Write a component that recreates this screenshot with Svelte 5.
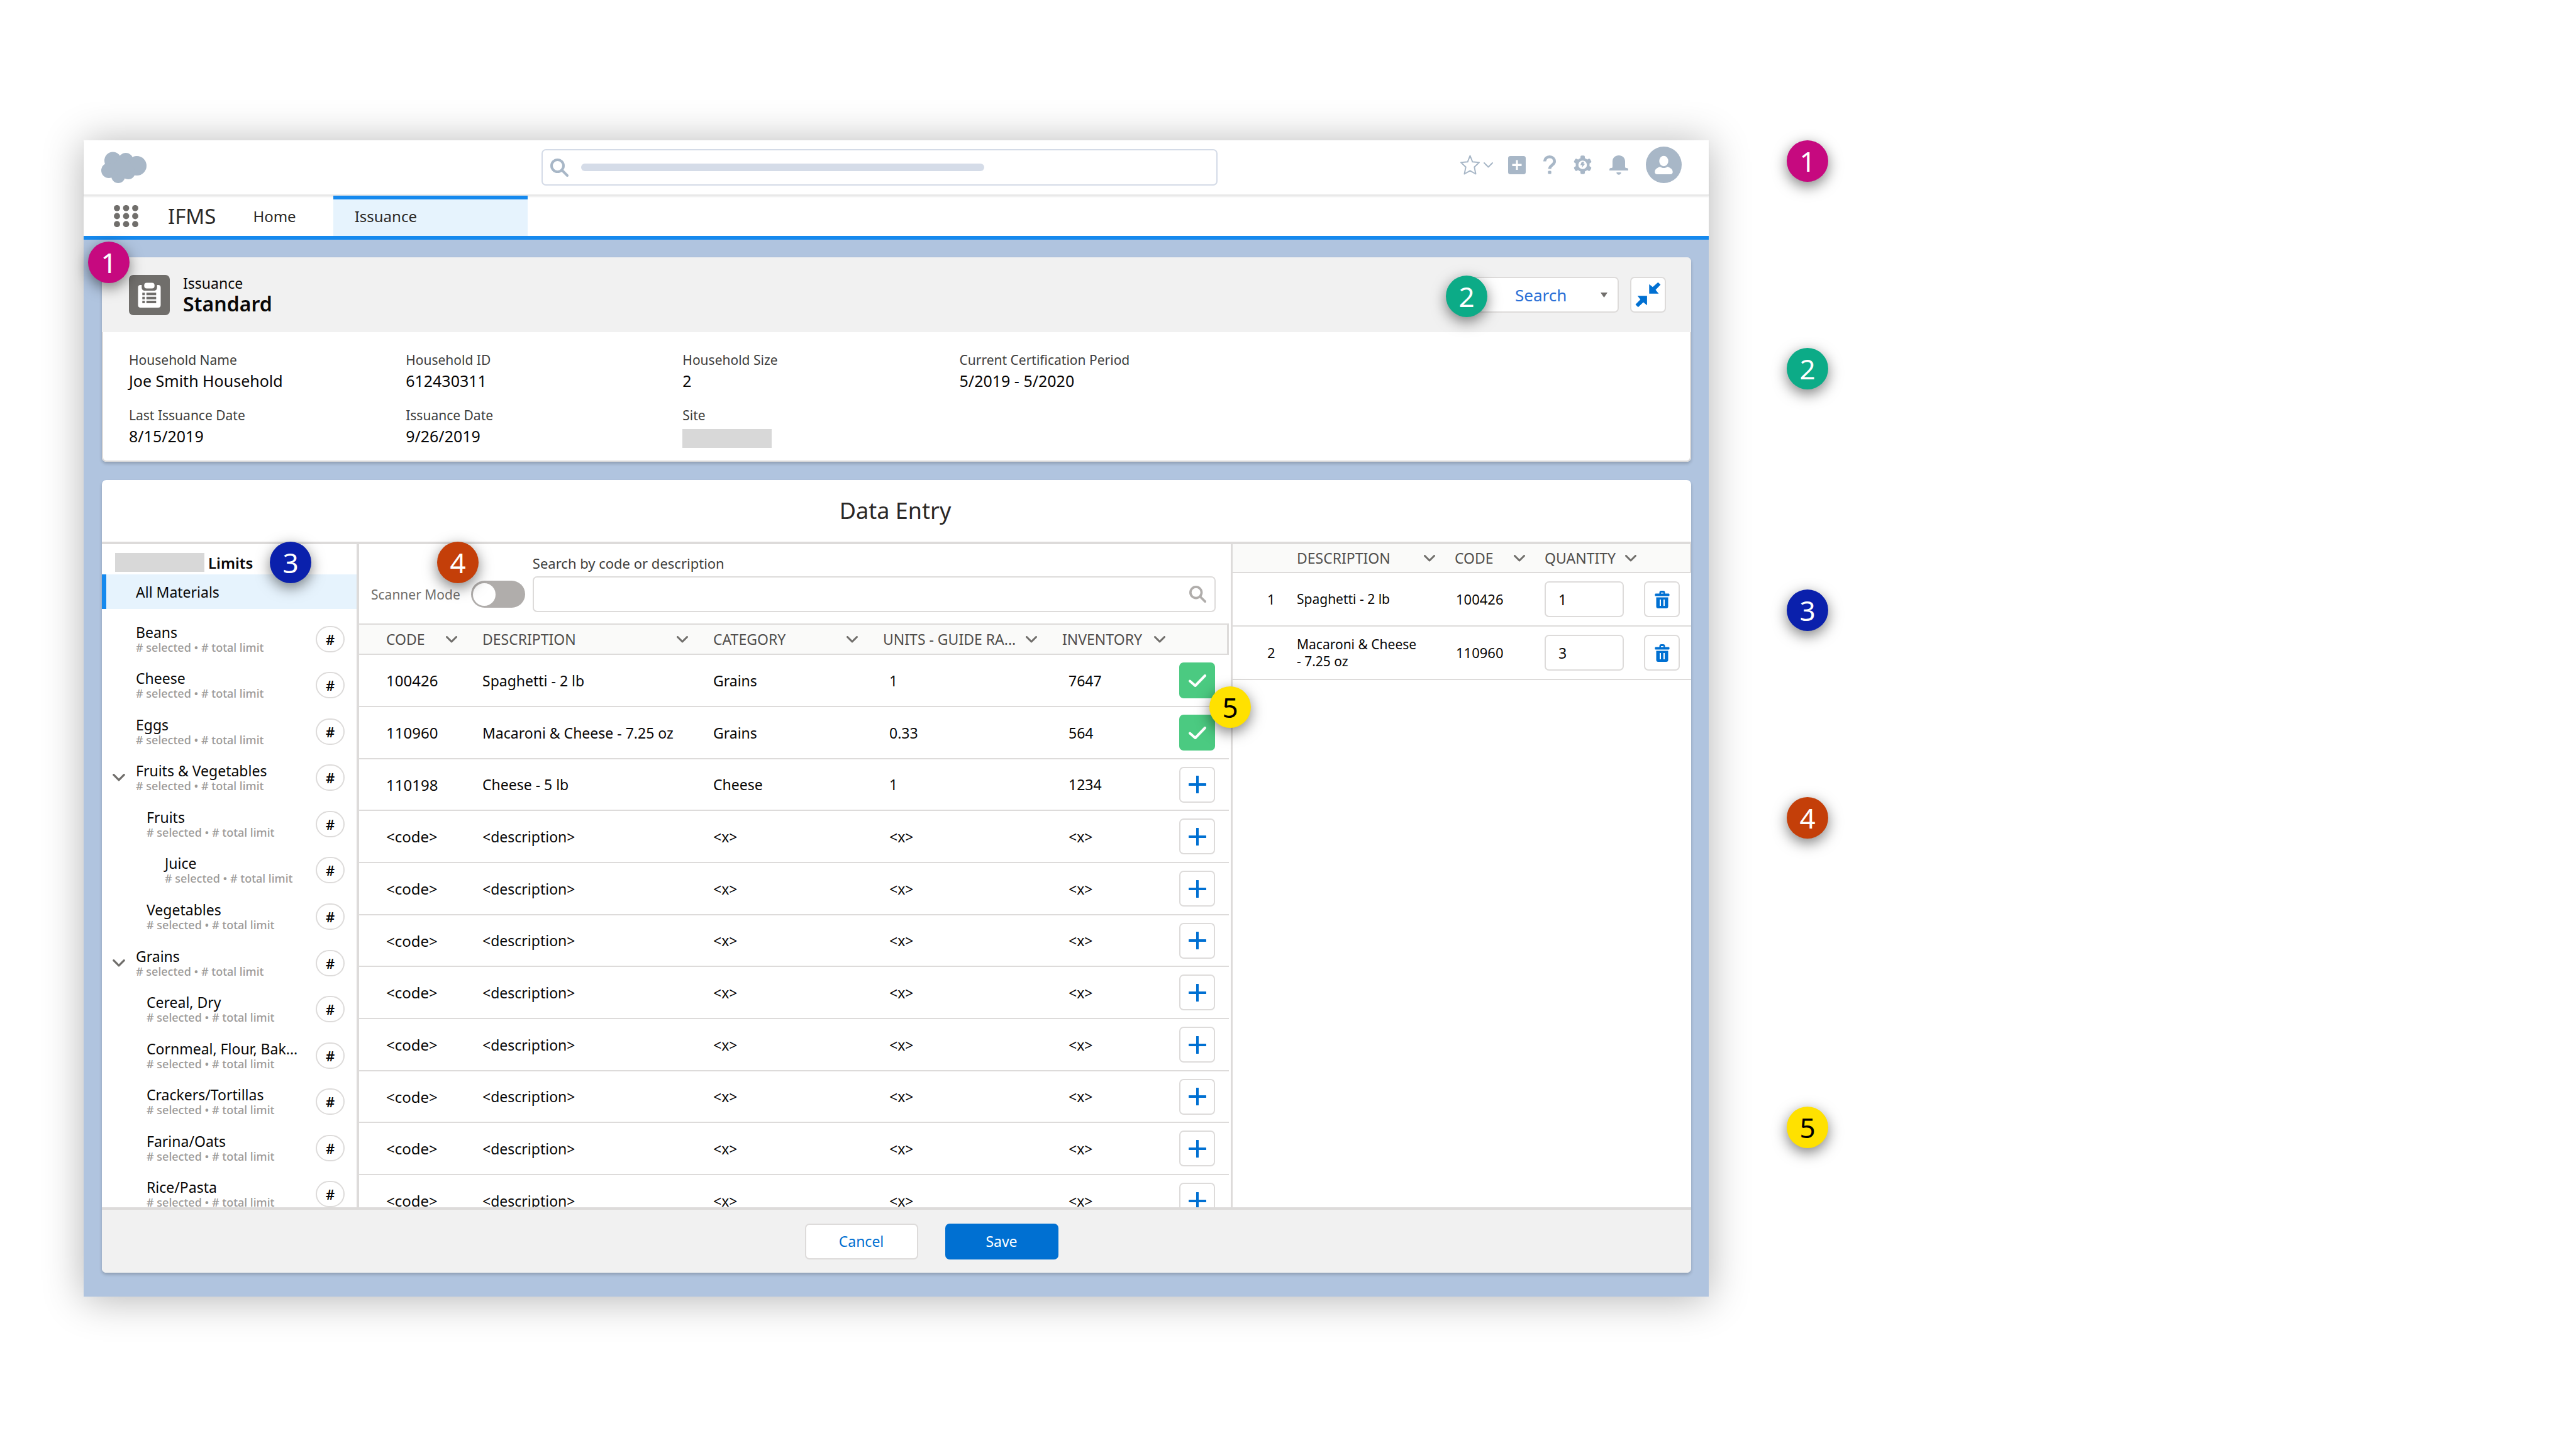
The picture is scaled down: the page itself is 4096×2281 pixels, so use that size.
<script>
  const fields = [
    { label: 'Household Name', value: 'Joe Smith Household' },
    { label: 'Household ID', value: '612430311' },
    { label: 'Household Size', value: '2' },
    { label: 'Current Certification Period', value: '5/2019 - 5/2020' },
    { label: 'Last Issuance Date', value: '8/15/2019' },
    { label: 'Issuance Date', value: '9/26/2019' },
    { label: 'Site', value: '' }
  ];

  const limits = [
    { name: 'Beans', level: 0 },
    { name: 'Cheese', level: 0 },
    { name: 'Eggs', level: 0 },
    { name: 'Fruits & Vegetables', level: 0, open: true },
    { name: 'Fruits', level: 1 },
    { name: 'Juice', level: 2 },
    { name: 'Vegetables', level: 1 },
    { name: 'Grains', level: 0, open: true },
    { name: 'Cereal, Dry', level: 1 },
    { name: 'Cornmeal, Flour, Bak...', level: 1 },
    { name: 'Crackers/Tortillas', level: 1 },
    { name: 'Farina/Oats', level: 1 },
    { name: 'Rice/Pasta', level: 1 }
  ];

  const blank = { code: '<code>', desc: '<description>', cat: '<x>', units: '<x>', stock: '<x>', added: false };
  const materials = [
    { code: '100426', desc: 'Spaghetti - 2 lb', cat: 'Grains', units: '1', stock: '7647', added: true },
    { code: '110960', desc: 'Macaroni & Cheese - 7.25 oz', cat: 'Grains', units: '0.33', stock: '564', added: true },
    { code: '110198', desc: 'Cheese - 5 lb', cat: 'Cheese', units: '1', stock: '1234', added: false },
    ...Array.from({ length: 8 }, () => ({ ...blank }))
  ];
  const materialHeads = ['CODE', 'DESCRIPTION', 'CATEGORY', 'UNITS - GUIDE RA...', 'INVENTORY'];

  let lines = $state([
    { desc: 'Spaghetti - 2 lb', code: '100426', qty: '1' },
    { desc: 'Macaroni & Cheese - 7.25 oz', code: '110960', qty: '3' }
  ]);
  const lineHeads = ['DESCRIPTION', 'CODE', 'QUANTITY'];
</script>

{#snippet chevron()}
  <svg class="chev" viewBox="0 0 18 11" aria-hidden="true"><path d="M1.5 1.5 9 9l7.500-7.500" /></svg>
{/snippet}

{#snippet lens()}
  <svg class="lens" viewBox="0 0 29 29" aria-hidden="true"><circle cx="11.500" cy="11.500" r="9.500" /><path d="M18.500 18.500 27 27" /></svg>
{/snippet}

<div class="page">
  <div class="window">
    <header class="top">
      <svg class="cloud" viewBox="0 0 72 50" role="img" aria-label="Cloud">
        <ellipse cx="18.500" cy="14.500" rx="13.500" ry="14" /><ellipse cx="39" cy="13.500" rx="11.500" ry="11.500" /><circle cx="56.500" cy="22.500" r="15.500" />
        <circle cx="12" cy="30" r="12" /><circle cx="27" cy="39" r="11" /><circle cx="43" cy="33" r="11" /><circle cx="34" cy="25" r="14" />
      </svg>
      <label class="global">
        {@render lens()}
        <span class="bar"></span>
        <input type="text" aria-label="Search" />
      </label>
      <div class="tools">
        <div class="lead">
          <button class="fav" aria-label="Favorites">
            <svg width="31" height="32" viewBox="0 0 31 32"><path class="line" d="M15.500 1.500 19.400 11.300 30 12.200 22.300 19.400 24.500 30.500 15.500 25.300 6.500 30.500 8.700 19.400 1 12.200 11.600 11.300Z" /></svg>
            <svg width="15" height="9" viewBox="0 0 15 9"><path class="line" d="M1 1 7.500 7.500 14 1" /></svg>
          </button>
          <button aria-label="Add">
            <svg width="28" height="29" viewBox="0 0 28 29"><path fill-rule="evenodd" d="M3.500 0h21a3.500 3.500 0 0 1 3.500 3.500v22a3.500 3.500 0 0 1-3.500 3.500h-21a3.500 3.500 0 0 1-3.500-3.500v-22a3.500 3.500 0 0 1 3.500-3.500ZM12.500 6.500v6h-6v3.500h6v6h3v-6h6v-3.500h-6v-6Z" /></svg>
          </button>
        </div>
        <button aria-label="Help">
          <svg width="20" height="30" viewBox="0 0 20 30"><path class="bold" d="M2.300 9.500C2.300 5 5.500 2.300 10 2.300S17.700 5.500 17.700 9.800C17.700 15.500 10 15.500 10 21.500" /><rect x="7.300" y="24.500" width="5.400" height="5" rx="1.500" /></svg>
        </button>
        <button aria-label="Setup">
          <svg width="29" height="30" viewBox="-14.500 -15 29 30">
            {#each [0, 60, 120, 180, 240, 300] as a}
              <rect x="-3.500" y="-14.700" width="7" height="8" rx="2" transform={`rotate(${a})`} />
            {/each}
            <circle class="ring" r="8.900" />
            <path d="M-1.500-4.800h4l-1.300 3.300h2.600l-5.200 6.300 1-4.300h-3.200Z" />
          </svg>
        </button>
        <button aria-label="Notifications">
          <svg width="30" height="31" viewBox="0 0 30 31"><path d="M5 10C5 4 9 0 15 0s10 4 10 10v8c0 2 1 2 3.500 2.300 1 .2 1.500 1 1.500 3.700H0c0-2.700.500-3.500 1.500-3.700C4 20 5 20 5 18ZM11.300 27h7.400c0 5-7.400 5-7.400 0Z" /></svg>
        </button>
        <button aria-label="Profile">
          <svg width="57" height="58" viewBox="0 0 57 58"><ellipse cx="28.500" cy="29" rx="28.500" ry="29" /><ellipse class="paper" cx="28.500" cy="23" rx="7.200" ry="8.200" /><path class="paper" d="M18 44c-2.500 0-3.700-1.500-3.700-3.500 0-5 3.200-6.200 8.200-8.500 4 2.800 8 2.800 12 0 5 2.300 8.200 3.500 8.200 8.500 0 2-1.200 3.500-3.700 3.500Z" /></svg>
        </button>
      </div>
    </header>

    <nav>
      <button class="launcher" aria-label="App launcher">
        <svg width="39" height="35" viewBox="0 0 39 35">
          {#each [0, 1, 2] as r}{#each [0, 1, 2] as c}<circle cx={5 + c * 14.500} cy={4.800 + r * 12.700} r="4.900" />{/each}{/each}
        </svg>
      </button>
      <span class="brand">IFMS</span>
      <a class="home" href="#home">Home</a>
      <a class="tab" href="#issuance" aria-current="page">Issuance</a>
    </nav>

    <main>
      <section class="card summary">
        <span class="badge magenta one">1</span>
        <div class="heading">
          <svg class="tile" width="65" height="64" viewBox="0 0 65 64" aria-hidden="true">
            <rect width="65" height="64" rx="7" fill="#706e6b" />
            <rect x="14.500" y="16" width="36" height="36" rx="4" fill="#fff" />
            <path d="M20.300 16h24.400v4c0 3-2 5-5 5H25.300c-3 0-5-2-5-5Z" fill="#706e6b" />
            <rect x="24.300" y="12.500" width="16.400" height="9" rx="4" fill="#fff" />
            <path d="M21.300 28.200h4v4h-4ZM27.800 28.200h15.500v4H27.800ZM21.300 34.700h4v4h-4ZM27.800 34.700h15.500v4H27.800ZM21.300 41h4v4h-4ZM27.800 41h15.500v4H27.800Z" fill="#706e6b" />
          </svg>
          <div class="titles">
            <p>Issuance</p>
            <h1>Standard</h1>
          </div>
          <div class="split">
            <span class="badge green two">2</span>
            <button class="search">Search</button>
            <button class="more" aria-label="More actions"><svg width="11" height="8" viewBox="0 0 11 8"><path d="M0 0h11L5.500 8Z" /></svg></button>
          </div>
          <button class="square" aria-label="Collapse">
            <svg width="57" height="57" viewBox="0 0 57 57"><path d="M30.300 26.700V11.800l5.600 4.400 8.500-7.400 4 3.800-7.900 8.100 4.900 6ZM26.900 30.300H11.700l4.700 5.600L8.500 44l4.200 4.300L21 40.500l5.900 4.800Z" /></svg>
          </button>
        </div>
        <dl>
          {#each fields as f}
            <div>
              <dt>{f.label}</dt>
              <dd>{#if f.value}{f.value}{:else}<span class="redact"></span>{/if}</dd>
            </div>
          {/each}
        </dl>
      </section>

      <section class="card entry">
        <h2>Data Entry</h2>
        <div class="panels">
          <aside>
            <span class="badge blue three">3</span>
            <h3><span class="redact"></span>Limits</h3>
            <a class="all" href="#all">All Materials</a>
            <div class="clip">
              <ul>
                {#each limits as l}
                  <li class={`level${l.level}`}>
                    {#if l.open}
                      <button class="twist" aria-label={`Collapse ${l.name}`}>{@render chevron()}</button>
                    {/if}
                    <div class="name">
                      <span>{l.name}</span>
                      <small># selected • # total limit</small>
                    </div>
                    <span class="count">#</span>
                  </li>
                {/each}
              </ul>
            </div>
          </aside>

          <div class="middle">
            <span class="badge orange four">4</span>
            <span class="badge yellow five">5</span>
            <div class="filters">
              <label class="scanner">Scanner Mode <input type="checkbox" /></label>
              <div class="finder">
                <label for="find">Search by code or description</label>
                <div class="box"><input id="find" type="text" />{@render lens()}</div>
              </div>
            </div>
            <div class="clip">
              <table class="materials">
                <colgroup><col class="m1" /><col class="m2" /><col class="m3" /><col class="m4" /><col class="m5" /><col class="m6" /></colgroup>
                <thead>
                  <tr>
                    {#each materialHeads as h}<th><span>{h}{@render chevron()}</span></th>{/each}
                    <th aria-label="Add"></th>
                  </tr>
                </thead>
                <tbody>
                  {#each materials as m}
                    <tr>
                      <td>{m.code}</td>
                      <td>{m.desc}</td>
                      <td>{m.cat}</td>
                      <td class="num">{m.units}</td>
                      <td class="num">{m.stock}</td>
                      <td class="act">
                        {#if m.added}
                          <button class="square added" aria-label="Added"><svg width="28" height="20" viewBox="0 0 28 20"><path d="M2 10.500 10.500 18 26 2" /></svg></button>
                        {:else}
                          <button class="square" aria-label="Add"><svg width="28" height="28" viewBox="0 0 28 28"><path d="M12 1a2 2 0 0 1 4 0v11h11a2 2 0 0 1 0 4H16v11a2 2 0 0 1-4 0V16H1a2 2 0 0 1 0-4h11Z" /></svg></button>
                        {/if}
                      </td>
                    </tr>
                  {/each}
                </tbody>
              </table>
            </div>
          </div>

          <div class="right">
            <table class="lines">
              <colgroup><col class="n1" /><col class="n2" /><col class="n3" /><col class="n4" /><col class="n5" /></colgroup>
              <thead>
                <tr>
                  <th aria-label="Line"></th>
                  {#each lineHeads as h}<th><span>{h}{@render chevron()}</span></th>{/each}
                  <th aria-label="Remove"></th>
                </tr>
              </thead>
              <tbody>
                {#each lines as l, i}
                  <tr>
                    <td class="index">{i + 1}</td>
                    <td class="what">{l.desc}</td>
                    <td class="code">{l.code}</td>
                    <td><input type="text" aria-label={`Quantity of ${l.desc}`} bind:value={l.qty} /></td>
                    <td>
                      <button class="square" aria-label={`Remove ${l.desc}`}>
                        <svg width="24" height="28" viewBox="0 0 24 28"><path fill-rule="evenodd" d="M1.500 4.500H7.500V3c0-2 1-3 3-3h3c2 0 3 1 3 3v1.500h6c1.500 0 1.500 4 0 4h-21c-1.500 0-1.500-4 0-4ZM10 4.500h4V3h-4ZM2.500 10.500h19V25c0 2-1 3-3 3h-13c-2 0-3-1-3-3ZM8 14v10h2V14ZM14 14v10h2V14Z" /></svg>
                      </button>
                    </td>
                  </tr>
                {/each}
              </tbody>
            </table>
          </div>
        </div>
        <footer>
          <button class="cancel">Cancel</button>
          <button class="save">Save</button>
        </footer>
      </section>
    </main>
  </div>

  <ol class="legend">
    <li><span class="badge magenta">1</span></li>
    <li><span class="badge green">2</span></li>
    <li><span class="badge blue">3</span></li>
    <li><span class="badge orange">4</span></li>
    <li><span class="badge yellow">5</span></li>
  </ol>
</div>

<style>
  :global(body) {
    background: #fff;
  }
  .page,
  .page * {
    box-sizing: border-box;
  }
  .page {
    display: grid;
    grid-template-columns: 2584fr 1379fr;
    height: 100vh;
    padding: 223px 0 220px 133px;
    overflow: hidden;
    font-family: 'Noto Sans', 'Open Sans', sans-serif;
    font-size: 23px;
    color: #080707;
  }
  h1, h2, h3, p, dl, dd, ul, ol {
    margin: 0;
    padding: 0;
    list-style: none;
  }
  button, input {
    margin: 0;
    padding: 0;
    border: 0;
    background: none;
    font: inherit;
    color: inherit;
  }
  a {
    color: inherit;
    text-decoration: none;
  }
  svg {
    display: block;
    flex: none;
  }
  .window {
    display: flex;
    flex-direction: column;
    min-height: 0;
    background: #b0c4df;
    box-shadow: 0 4px 60px rgba(0, 0, 0, 0.3);
  }
  .chev {
    width: 18px;
    height: 11px;
    fill: none;
    stroke: #706e6b;
    stroke-width: 3;
    stroke-linecap: round;
    stroke-linejoin: round;
  }
  .lens {
    width: 29px;
    height: 29px;
    fill: none;
    stroke: #a8b7c7;
    stroke-width: 4;
    stroke-linecap: round;
  }

  .top {
    position: relative;
    z-index: 1;
    display: grid;
    grid-template-columns: 728fr 1075fr 781fr;
    align-items: center;
    height: 88px;
    background: #fff;
    border-bottom: 2px solid #e8e8e8;
    box-shadow: 0 2px 2px rgba(0, 0, 0, 0.08);
  }
  .cloud {
    width: 72px;
    height: 50px;
    margin-left: 28px;
    fill: #a8b7c7;
  }
  .global {
    display: flex;
    align-items: center;
    gap: 20px;
    height: 58px;
    padding: 0 12px;
    border: 2px solid #d4dbe7;
    border-radius: 7px;
  }
  .bar {
    width: 641px;
    height: 12px;
    border-radius: 6px;
    background: #d5dce8;
  }
  .global input {
    flex: 1;
    min-width: 0;
  }
  .tools {
    display: flex;
    align-items: center;
    justify-content: flex-end;
    gap: 28px;
    padding: 0 43px 8px 0;
    fill: #a8b7c7;
  }
  .lead {
    display: flex;
    align-items: center;
    gap: 24px;
  }
  .fav {
    display: flex;
    align-items: center;
    gap: 6px;
  }
  .line {
    fill: none;
    stroke: #a8b7c7;
    stroke-width: 2;
    stroke-linejoin: round;
    stroke-linecap: round;
  }
  .bold {
    fill: none;
    stroke: #a8b7c7;
    stroke-width: 4.600;
    stroke-linecap: butt;
  }
  .ring {
    fill: #fff;
    stroke: #a8b7c7;
    stroke-width: 4.200;
  }
  .paper {
    fill: #fff;
  }

  nav {
    display: flex;
    align-items: center;
    height: 70px;
    padding-left: 48px;
    background: #fff;
    border-bottom: 6px solid #1589ee;
    color: #2b2826;
  }
  .launcher {
    margin-right: 47px;
    fill: #706e6b;
  }
  .brand {
    font-size: 33px;
  }
  .home {
    padding: 0 59px;
  }
  .home,
  .tab {
    font-size: 24px;
  }
  .tab {
    position: relative;
    z-index: 2;
    display: flex;
    align-items: center;
    align-self: stretch;
    width: 309px;
    padding-left: 34px;
    background: #e6f3fd;
    box-shadow: inset 0 6px 0 #1589ee;
  }

  main {
    flex: 1;
    display: flex;
    flex-direction: column;
    gap: 29px;
    min-height: 0;
    padding: 28px 28px 38px 29px;
  }
  .card {
    position: relative;
    background: #fff;
    border-radius: 7px;
    box-shadow: 0 3px 5px rgba(0, 0, 0, 0.2);
  }
  .summary {
    box-shadow: inset 0 0 0 2px #dddbda, 0 3px 5px rgba(0, 0, 0, 0.2);
  }
  .heading {
    display: flex;
    align-items: center;
    height: 119px;
    padding: 0 40px 0 43px;
    background: #f1f1f1;
    border-radius: 7px 7px 0 0;
  }
  .titles {
    flex: 1;
    padding-left: 21px;
  }
  .titles p {
    line-height: 28px;
  }
  h1 {
    font-size: 32px;
    line-height: 38px;
    font-weight: 600;
  }
  .split {
    position: relative;
    display: flex;
    align-items: center;
    justify-content: space-between;
    width: 242px;
    height: 57px;
    margin-right: 18px;
    background: #fff;
    border: 2px solid #dddbda;
    border-radius: 7px;
  }
  .search {
    padding-left: 75px;
    font-size: 26px;
    color: #2a6fd6;
  }
  .more {
    padding-right: 16px;
    fill: #706e6b;
  }
  .square {
    display: flex;
    align-items: center;
    justify-content: center;
    width: 57px;
    height: 57px;
    background: #fff;
    border: 2px solid #dddbda;
    border-radius: 7px;
    fill: #0070d2;
  }
  .added {
    background: #4bca81;
    border-color: #4bca81;
    fill: none;
    stroke: #fff;
    stroke-width: 4;
    stroke-linecap: round;
    stroke-linejoin: round;
  }
  dl {
    display: grid;
    grid-template-columns: repeat(4, 440fr) 723fr;
    row-gap: 22px;
    padding: 29px 0 23px 43px;
  }
  dl div:nth-child(5) {
    grid-column: 1;
  }
  dt {
    font-size: 21px;
    line-height: 30px;
    color: #3e3e3c;
  }
  dd {
    display: flow-root;
    height: 36px;
    line-height: 36px;
    font-size: 25px;
  }
  .redact {
    display: block;
    width: 142px;
    height: 30px;
    background: #d8d8d8;
  }
  dd .redact {
    margin-top: 7px;
  }

  .entry {
    flex: 1;
    display: flex;
    flex-direction: column;
    min-height: 0;
  }
  h2 {
    height: 102px;
    padding-right: 4px;
    border-bottom: 4px solid #dddbda;
    font-size: 36px;
    font-weight: 400;
    line-height: 98px;
    text-align: center;
    color: #2b2826;
  }
  .panels {
    flex: 1;
    display: grid;
    grid-template-columns: 409fr 1389fr 729fr;
    grid-template-rows: minmax(0, 1fr);
    min-height: 0;
  }
  aside,
  .middle {
    position: relative;
    display: flex;
    flex-direction: column;
    min-width: 0;
    min-height: 0;
  }
  aside {
    border-right: 4px solid #dddbda;
  }
  .middle {
    border-right: 3px solid #dddbda;
  }
  .clip {
    flex: 1;
    min-height: 0;
    overflow: hidden;
  }
  h3 {
    display: flex;
    align-items: center;
    gap: 6px;
    height: 48px;
    padding: 10px 0 0 21px;
    font-size: 24px;
    font-weight: 600;
  }
  .all {
    display: flex;
    align-items: center;
    height: 55px;
    padding-left: 47px;
    background: #e6f3fd;
    border-left: 7px solid #1589ee;
  }
  ul {
    display: grid;
    grid-template-rows: repeat(13, 1fr);
    height: 967px;
    padding-top: 11px;
  }
  li {
    position: relative;
    display: flex;
    align-items: center;
  }
  ul li {
    padding: 0 19px 0 54px;
  }
  ul .level1 {
    padding-left: 71px;
  }
  ul .level2 {
    padding-left: 100px;
  }
  .twist {
    position: absolute;
    left: 17px;
  }
  .twist .chev {
    width: 20px;
    height: 12px;
  }
  .name {
    flex: 1;
    display: flex;
    flex-direction: column;
    white-space: nowrap;
    line-height: 26px;
  }
  small {
    font-size: 18px;
    line-height: 22px;
    font-weight: 500;
    color: #9c9a98;
  }
  .count {
    display: flex;
    align-items: center;
    justify-content: center;
    width: 46px;
    height: 42px;
    border: 2px solid #dddbda;
    border-radius: 21px;
    font-size: 22px;
    font-weight: 600;
  }

  .filters {
    display: flex;
    align-items: flex-end;
    gap: 12px;
    height: 126px;
    padding: 0 24px 18px 19px;
  }
  .scanner {
    display: flex;
    align-items: center;
    gap: 17px;
    height: 57px;
    font-size: 21px;
    color: #706e6b;
    white-space: nowrap;
  }
  .scanner input {
    appearance: none;
    display: flex;
    align-items: center;
    width: 86px;
    height: 43px;
    padding: 3px;
    border-radius: 22px;
    background: #b0adab;
  }
  .scanner input::before {
    content: '';
    width: 36px;
    height: 36px;
    border-radius: 50%;
    background: #fff;
  }
  .scanner input:checked {
    justify-content: flex-end;
    background: #0070d2;
  }
  .finder {
    flex: 1;
  }
  .finder label {
    display: block;
    font-size: 22px;
    line-height: 42px;
    color: #3e3e3c;
  }
  .box {
    display: flex;
    align-items: center;
    height: 57px;
    padding: 0 13px;
    border: 2px solid #dddbda;
    border-radius: 7px;
  }
  .box input {
    flex: 1;
    min-width: 0;
  }
  .box .lens {
    width: 27px;
    height: 27px;
    stroke: #b0adab;
  }

  table {
    width: 100%;
    border-collapse: separate;
    border-spacing: 0;
    table-layout: fixed;
  }
  th {
    padding: 0 20px;
    background: #fafaf9;
    border-bottom: 2px solid #dddbda;
    color: #514f4d;
    font-weight: 400;
    white-space: nowrap;
  }
  th span {
    display: flex;
    align-items: center;
    justify-content: space-between;
  }
  td {
    padding: 0 20px;
    border-bottom: 2px solid #dddbda;
    text-align: left;
  }
  .materials {
    width: calc(100% - 3px);
  }
  .materials th {
    height: 50px;
    border-top: 2px solid #dddbda;
  }
  .materials th:last-child {
    border-right: 3px solid #dddbda;
  }
  .materials th:first-child,
  .materials td:first-child {
    padding-left: 43px;
  }
  .materials td:first-child {
    font-size: 24px;
  }
  .materials td {
    height: 83px;
    white-space: nowrap;
  }
  .materials tr:nth-child(3n) td {
    height: 82px;
  }
  .materials .num {
    padding-left: 30px;
  }
  .materials .act {
    padding: 0 21px 0 2px;
  }
  .m1 { width: 176px; }
  .m2 { width: 367px; }
  .m3 { width: 270px; }
  .m4 { width: 285px; }
  .m5 { width: 204px; }
  .m6 { width: 81px; }

  .lines th {
    height: 46px;
    padding-right: 11px;
  }
  .lines th:last-child {
    border-right: 2px solid #dddbda;
  }
  .lines td {
    height: 85px;
    font-size: 22px;
    line-height: 27px;
  }
  .lines td:last-child {
    padding: 0 0 0 1px;
  }
  .lines .index {
    padding: 0 0 0 55px;
  }
  .lines .what {
    padding-right: 34px;
    font-size: 21px;
  }
  .lines .code {
    padding: 0 0 0 22px;
  }
  .lines input {
    display: block;
    width: 126px;
    height: 57px;
    padding: 0 20px;
    border: 2px solid #dddbda;
    border-radius: 7px;
    font-size: 23px;
  }
  .n1 { width: 82px; }
  .n2 { width: 251px; }
  .n3 { width: 143px; }
  .n4 { width: 177px; }
  .n5 { width: 76px; }

  footer {
    display: flex;
    align-items: center;
    justify-content: center;
    gap: 43px;
    height: 104px;
    padding-left: 111px;
    background: #f1f1f1;
    border-top: 4px solid #dddbda;
    border-radius: 0 0 7px 7px;
  }
  footer button {
    width: 180px;
    height: 57px;
    border-radius: 7px;
  }
  .cancel {
    background: #fff;
    border: 2px solid #dddbda;
    color: #0070d2;
  }
  .save {
    background: #0070d2;
    color: #fff;
  }

  .badge {
    display: flex;
    align-items: center;
    justify-content: center;
    width: 66px;
    height: 66px;
    border-radius: 50%;
    box-shadow: 0 7px 22px rgba(0, 0, 0, 0.5);
    font-size: 44px;
    font-weight: 400;
    line-height: 66px;
    color: #fff;
  }
  .magenta { background: #c6097f; }
  .green { background: #0cab87; }
  .blue { background: #0a20ac; }
  .orange { background: #c43f09; }
  .yellow { background: #ffe100; color: #000; }
  .one, .two, .three, .four, .five {
    position: absolute;
    z-index: 3;
  }
  .one { left: -22px; top: -25px; }
  .two { left: -35px; top: -4px; }
  .three { left: 267px; top: -4px; }
  .four { left: 124px; top: -4px; }
  .five { right: -32px; top: 226px; }
  .legend {
    display: grid;
    grid-template-rows: 330px 384px 330px 492px auto;
    padding-left: 124px;
  }
  .legend li {
    align-items: flex-start;
  }
</style>
